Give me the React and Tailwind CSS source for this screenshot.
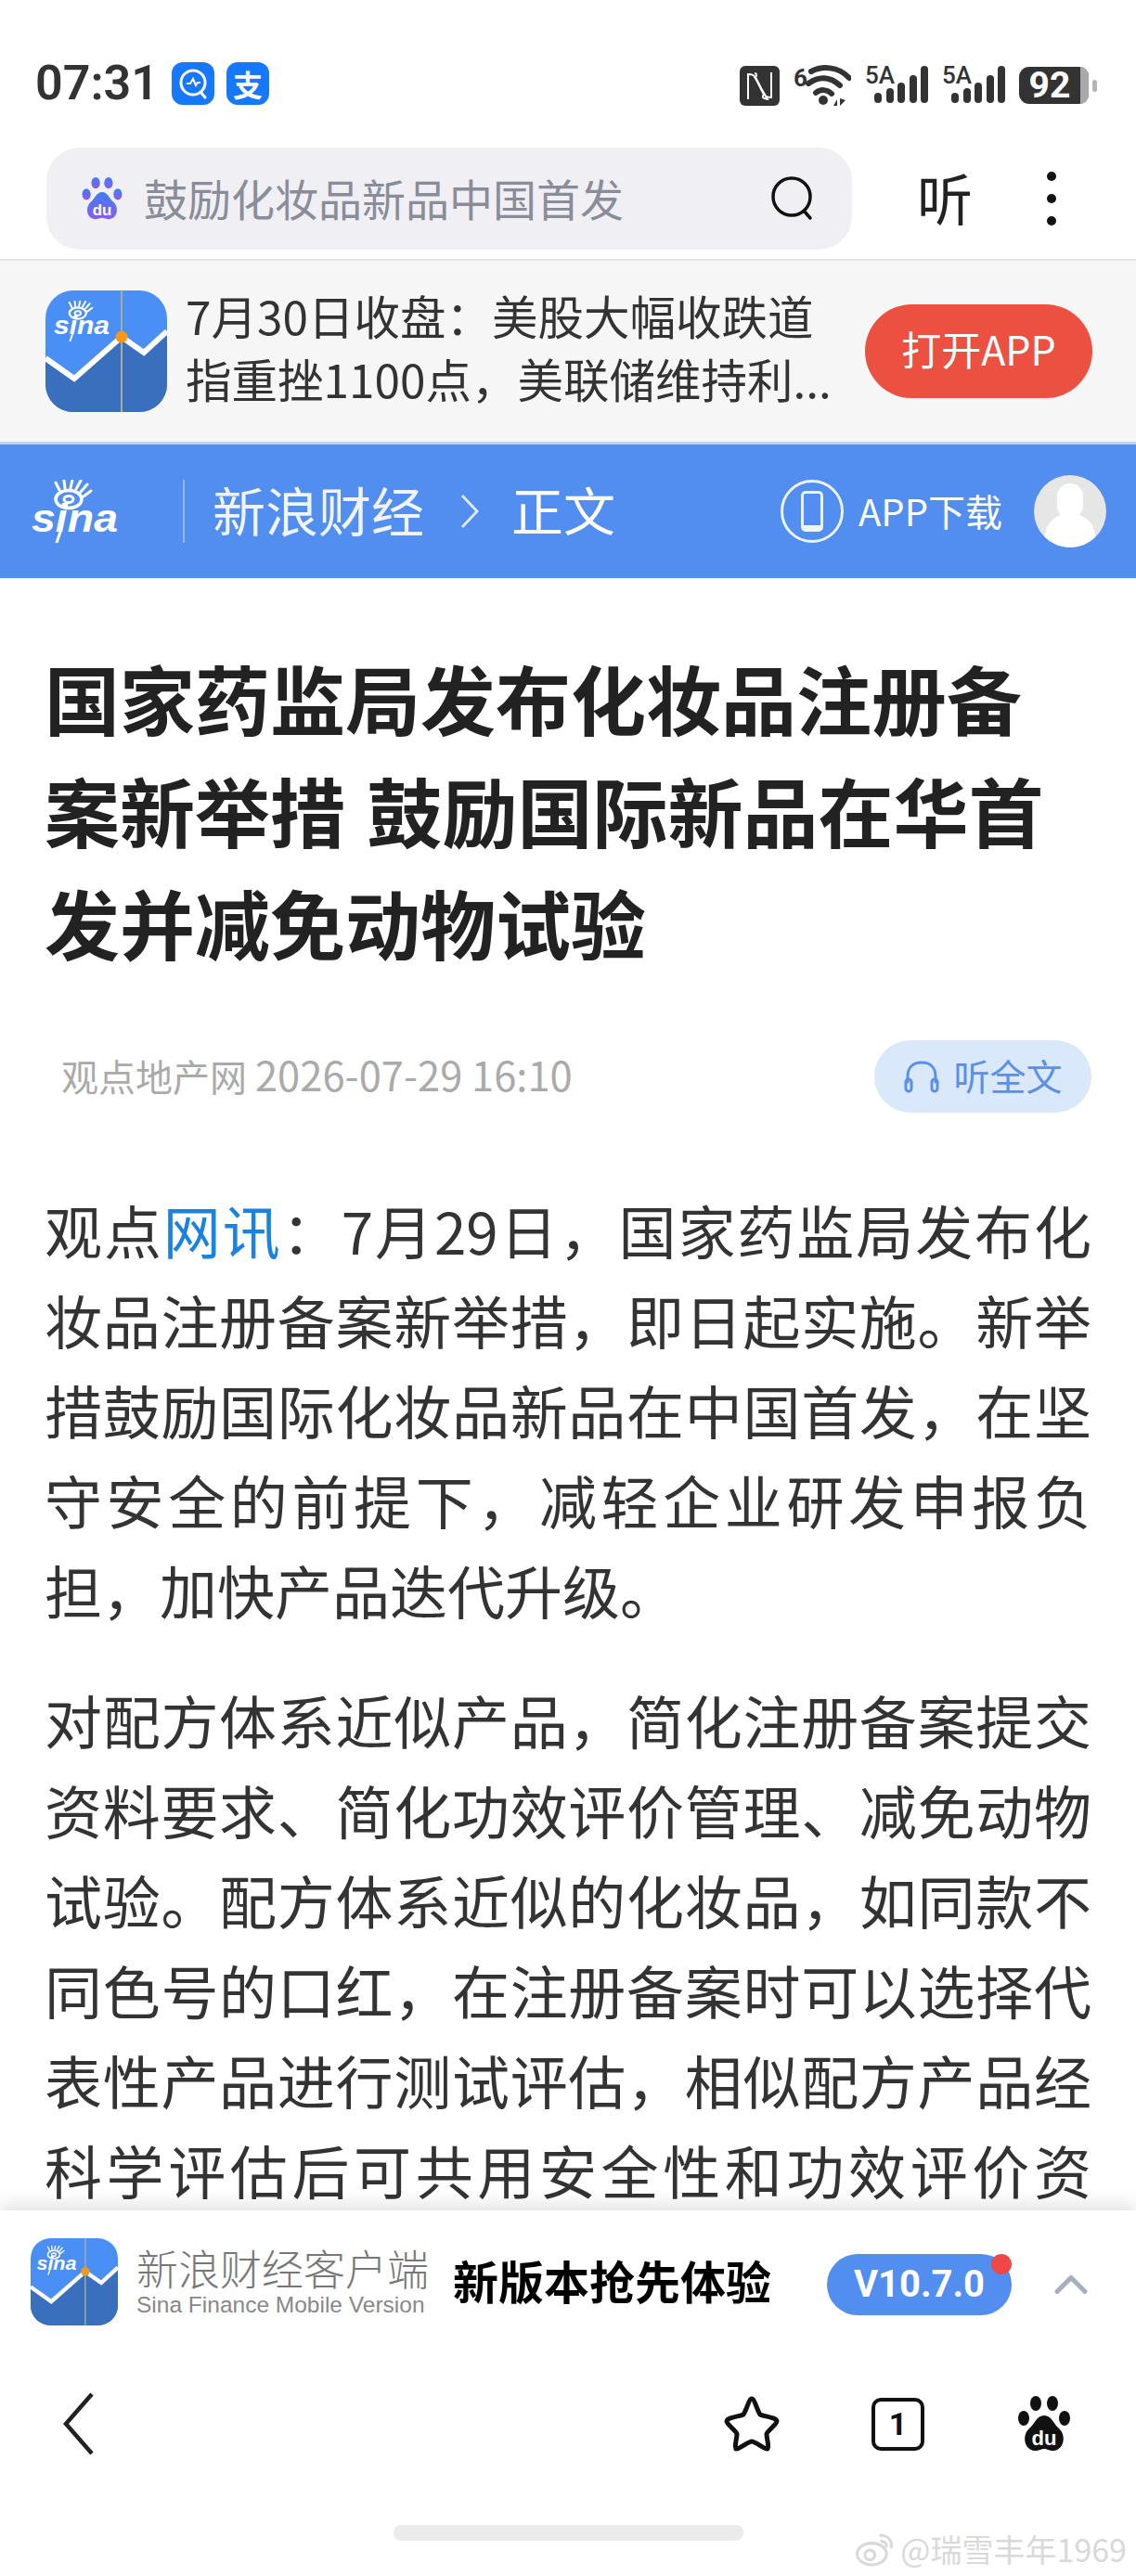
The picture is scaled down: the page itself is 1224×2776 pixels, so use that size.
import { ChevronUp } from 'lucide-react';

const CJK = '"Noto Sans CJK SC", "Noto Sans", sans-serif';

function SinaMark({ color = '#fff' }) {
  // eye + wordmark, drawn in a 95x68 box
  return (
    <svg viewBox="0 0 95 68" className="h-full w-full">
      <g fill="none" stroke={color}>
        <ellipse cx="41" cy="21" rx="14" ry="9.5" strokeWidth="3.5" />
        <ellipse cx="41" cy="21" rx="5" ry="3.5" strokeWidth="3" />
        <path d="M31 11 L27 3 M37 9 L36 1 M43 9 L45 0 M49 10 L54 1 M54 13 L61 5 M57 18 L65 12" strokeWidth="3" strokeLinecap="round" />
        <path d="M32 56 L28 68" strokeWidth="3" strokeLinecap="round" />
      </g>
      <text x="1" y="56" fill={color} fontFamily="Liberation Sans" fontStyle="italic" fontWeight="700" fontSize="42" textLength="93" lengthAdjust="spacingAndGlyphs">sina</text>
    </svg>
  );
}

function SinaAppIcon({ className }) {
  return (
    <svg viewBox="0 0 131 131" className={className}>
      <defs>
        <clipPath id="sq"><rect width="131" height="131" rx="30" /></clipPath>
      </defs>
      <g clipPath="url(#sq)">
        <rect width="131" height="131" fill="#4a8ff5" />
        <path d="M0 73 L31 95 L82 50 L106 67 L131 44 V131 H0 Z" fill="#3a6fbe" />
        <path d="M0 73 L31 95 L82 50 L106 67 L131 44" fill="none" stroke="#fff" strokeWidth="6" />
        <rect x="81" width="2" height="131" fill="#a9ab9f" />
        <circle cx="82" cy="50" r="6.5" fill="#f6981c" />
      </g>
      <svg x="8" y="11" width="62" height="44" viewBox="0 0 95 68"><SinaMark /></svg>
    </svg>
  );
}

function Paw({ className, gradient }) {
  const fill = gradient ? 'url(#pawg)' : '#111';
  return (
    <svg viewBox="0 0 56 60" className={className}>
      <defs>
        <linearGradient id="pawg" x1="0" y1="0" x2="0" y2="1">
          <stop offset="0" stopColor="#3f7df0" />
          <stop offset="1" stopColor="#8a5cf0" />
        </linearGradient>
      </defs>
      <ellipse cx="19" cy="8" rx="6" ry="8" fill={fill} />
      <ellipse cx="37" cy="8" rx="6" ry="8" fill={fill} />
      <ellipse cx="6" cy="24" rx="6" ry="8" fill={fill} />
      <ellipse cx="50" cy="24" rx="6" ry="8" fill={fill} />
      <path d="M28 21 C36 21 38 30 44 35 C52 42 50 58 38 59 C33 59 31 57 28 57 C25 57 23 59 18 59 C6 58 4 42 12 35 C18 30 20 21 28 21 Z" fill={fill} />
      <text x="28" y="53" textAnchor="middle" fill="#fff" fontFamily="Liberation Sans" fontWeight="700" fontSize="22">du</text>
    </svg>
  );
}

function Signal() {
  return (
    <div className="relative h-[42px] w-[68px]">
      <span className="absolute left-0 top-[-3px] font-['Roboto'] text-[26px] font-medium leading-[26px] text-[#333]">5A</span>
      <svg viewBox="0 0 68 42" className="h-full w-full">
        <g fill="#333">
          <rect x="10" y="29" width="8" height="11" rx="4" />
          <rect x="23" y="24" width="8" height="16" rx="4" />
          <rect x="35" y="18" width="8" height="22" rx="4" />
          <rect x="48" y="10" width="8" height="30" rx="4" />
          <rect x="60" y="0" width="8" height="40" rx="4" />
        </g>
      </svg>
    </div>
  );
}

function StatusIcons() {
  return (
    <div className="flex items-center gap-[15px]">
      <svg viewBox="0 0 43 43" className="h-[43px] w-[43px]">
        <rect width="43" height="43" rx="6" fill="#333" />
        <path d="M9 36 V9 C14 9 16 10 19 16 L26 30 C24 34 25 35 27 35 C28 35 29 36 30 36 L23 24 L15 10 M34 7 V34 C29 34 27 33 24 27 L17 13 C19 9 18 8 16 8" fill="none" stroke="#fff" strokeWidth="2" />
      </svg>
      <div className="relative h-[44px] w-[62px]">
        <span className="absolute left-0 top-[1px] font-['Roboto'] text-[26px] font-bold leading-[26px] text-[#333]">6</span>
        <svg viewBox="0 0 62 44" className="h-full w-full">
          <g fill="none" stroke="#333" strokeLinecap="round">
            <path d="M19 7 C30 1 48 1 60 14" strokeWidth="6" />
            <path d="M16 20 C27 12 39 12 50 22" strokeWidth="6" />
            <path d="M24 30 C29 26 36 26 41 31" strokeWidth="6" />
          </g>
          <circle cx="32" cy="38" r="5" fill="#333" />
          <path d="M43 44 L47 37 V44 Z M50 36 V44 L56 38 Z" fill="#333" />
        </svg>
      </div>
      <Signal />
      <Signal />
      <div className="flex items-center gap-[4px]">
        <div className="flex h-[40px] w-[75px] rounded-[11px] bg-[#333]">
          <span className="flex-1 text-center font-['Roboto'] text-[39px] font-bold leading-[40px] text-white">92</span>
          <span className="w-[9px] rounded-r-[11px] bg-[#a9a9a9]" />
        </div>
        <span className="h-[13px] w-[5px] rounded-full bg-[#b5b5b5]" />
      </div>
    </div>
  );
}

function StatusBar() {
  return (
    <div className="flex h-[159px] items-start justify-between pl-[38px] pr-[42px] pt-[67px]">
      <div className="flex items-center gap-[13px]">
        <span className="w-[134px] font-['Roboto'] text-[52px] font-semibold leading-[46px] text-[#333]">07:31</span>
        <div className="grid h-[46px] w-[46px] place-items-center rounded-[12px] bg-[#1677ff]">
          <svg viewBox="0 0 46 46" className="h-full w-full" fill="none" stroke="#fff" strokeWidth="3">
            <circle cx="23" cy="22" r="13" />
            <path d="M16 23 L20 23 L23 18 L26 25 L28 22 L31 22" strokeWidth="2" />
            <path d="M31 32 L36 38" strokeLinecap="round" />
          </svg>
        </div>
        <div className="grid h-[46px] w-[46px] place-items-center rounded-[12px] bg-[#1677ff] text-[32px] font-bold leading-none text-white">支</div>
      </div>
      <div className="pt-[3px]">
        <StatusIcons />
      </div>
    </div>
  );
}

function SearchRow() {
  return (
    <div className="flex h-[122px] items-start border-b-2 border-[#e4e4e4] pl-[50px]">
      <div className="flex h-[110px] w-[868px] items-center rounded-[36px] bg-[#f0f0f4] pl-[38px] pr-[40px]">
        <Paw gradient className="h-[46px] w-[44px]" />
        <span className="ml-[23px] flex-1 pb-[3px] text-[47px] leading-none text-[#8a8d99]">鼓励化妆品新品中国首发</span>
        <svg viewBox="0 0 48 48" className="h-[48px] w-[48px]" fill="none" stroke="#111" strokeWidth="3.5" strokeLinecap="round">
          <circle cx="23" cy="22" r="20" />
          <path d="M36 37 L43 45" />
        </svg>
      </div>
      <span className="ml-[70px] mt-[21px] text-[60px] leading-[64px] text-[#222]">听</span>
      <div className="ml-[80px] mt-[26px] flex flex-col gap-[14px]">
        <span className="h-[10px] w-[10px] rounded-full bg-[#111]" />
        <span className="h-[10px] w-[10px] rounded-full bg-[#111]" />
        <span className="h-[10px] w-[10px] rounded-full bg-[#111]" />
      </div>
    </div>
  );
}

function OpenAppBanner() {
  return (
    <div className="flex h-[198px] items-center border-b-[3px] border-[#bcd2f2] bg-[#f6f6f6] pl-[49px] pr-[47px]">
      <SinaAppIcon className="h-[131px] w-[131px] shrink-0" />
      <p className="ml-[20px] whitespace-nowrap pb-[10px] text-[49.5px] leading-[68px] text-[#333]">
        7月30日收盘：美股大幅收跌道
        <br />
        指重挫1100点，美联储维持利...
      </p>
      <button className="ml-auto h-[101px] w-[245px] rounded-full bg-[#ec5040] pb-[6px] text-[43px] text-white">打开APP</button>
    </div>
  );
}

function SinaHeader() {
  return (
    <div className="flex h-[144px] items-center bg-[#528df0] pl-[33px] pr-[32px] text-white">
      <div className="h-[68px] w-[95px]">
        <SinaMark />
      </div>
      <span className="ml-[69px] h-[68px] w-[2px] bg-white/40" />
      <span className="ml-[30px] pb-[6px] text-[57px] leading-none opacity-90">新浪财经</span>
      <svg viewBox="0 0 22 38" className="ml-[38px] h-[38px] w-[22px] opacity-80" fill="none" stroke="#fff" strokeWidth="3">
        <path d="M3 2 L19 19 L3 36" />
      </svg>
      <span className="ml-[34px] pb-[6px] text-[56px] leading-none">正文</span>
      <div className="ml-auto grid h-[68px] w-[68px] place-items-center rounded-full border-[3px] border-white/90">
        <span className="h-[44px] w-[24px] rounded-[5px] border-[3px] border-b-[7px] border-white/90" />
      </div>
      <span className="ml-[16px] pb-[2px] text-[40px] leading-none">APP下载</span>
      <div className="relative ml-[34px] h-[78px] w-[78px] overflow-hidden rounded-full bg-[#e6e6e6]">
        <span className="absolute left-[25px] top-[9px] h-[38px] w-[28px] rounded-full bg-white" />
        <span className="absolute left-[12px] top-[42px] h-[50px] w-[54px] rounded-[24px] bg-white" />
      </div>
    </div>
  );
}

function Article() {
  return (
    <div className="min-h-0 flex-1 overflow-hidden px-[48px]">
      <h1 className="mt-[67px] text-[81px] font-bold leading-[121px] text-[#222] [word-spacing:5px]">
        国家药监局发布化妆品注册备
        <br />
        案新举措 鼓励国际新品在华首
        <br />
        发并减免动物试验
      </h1>
      <div className="mt-[68px] flex h-[78px] items-center justify-between">
        <span className="pb-[4px] pl-[18px] text-[40px] leading-none text-[#aaa]">
          观点地产网 <span className="text-[43.5px]">2026-07-29 16:10</span>
        </span>
        <div className="flex h-[78px] w-[234px] items-center justify-center gap-[14px] rounded-full bg-[#dae8fb] pb-[3px] text-[39px] text-[#5b8fe8]">
          <svg viewBox="0 0 40 36" className="mt-[3px] h-[36px] w-[40px]" fill="none" stroke="#5b8fe8" strokeWidth="3" strokeLinecap="round">
            <path d="M5 24 V18 C5 8 11 3 20 3 C29 3 35 8 35 18 V24" />
            <rect x="3" y="21" width="6" height="13" rx="3" />
            <rect x="31" y="21" width="6" height="13" rx="3" />
          </svg>
          听全文
        </div>
      </div>
      <div className="mt-[78px] text-justify text-[62px] leading-[97px] text-[#333]">
        <p>
          观点<span className="text-[#1a82e2]">网讯</span>：7月29日，国家药监局发布化妆品注册备案新举措，即日起实施。新举措鼓励国际化妆品新品在中国首发，在坚守安全的前提下，减轻企业研发申报负担，加快产品迭代升级。
        </p>
        <p className="mt-[43px] [text-align-last:justify]">
          对配方体系近似产品，简化注册备案提交资料要求、简化功效评价管理、减免动物试验。配方体系近似的化妆品，如同款不同色号的口红，在注册备案时可以选择代表性产品进行测试评估，相似配方产品经科学评估后可共用安全性和功效评价资
        </p>
      </div>
    </div>
  );
}

function Footer() {
  return (
    <div className="relative z-10 h-[394px] shrink-0 bg-white shadow-[0_-6px_18px_rgba(0,0,0,0.12)]">
      <div className="flex h-[160px] items-center pb-[6px] pl-[33px]">
        <SinaAppIcon className="h-[94px] w-[94px] shrink-0" />
        <div className="ml-[20px] w-[316px] pb-[2px]">
          <div className="whitespace-nowrap text-[45px] font-light leading-[50px] text-[#777]">新浪财经客户端</div>
          <div className="mt-[2px] whitespace-nowrap font-['Liberation_Sans'] text-[24.5px] leading-[26px] text-[#888]">Sina Finance Mobile Version</div>
        </div>
        <span className="ml-[25px] whitespace-nowrap pb-[6px] text-[49px] font-bold leading-none text-black">新版本抢先体验</span>
        <div className="relative ml-[60px] mt-[6px] grid h-[66px] w-[199px] place-items-center rounded-full bg-[#528df0] font-['Roboto'] text-[40px] font-bold text-white">
          V10.7.0
          <span className="absolute right-0 top-0 h-[22px] w-[22px] rounded-full bg-[#f04848]" />
        </div>
        <ChevronUp size={60} strokeWidth={2} className="ml-[34px] mt-[6px] text-[#a9aebd]" />
      </div>
      <div className="flex h-[114px] items-center pt-[26px]">
        <svg viewBox="0 0 36 68" className="ml-[66px] h-[68px] w-[36px]" fill="none" stroke="#222" strokeWidth="4.5">
          <path d="M33 2 L5 34 L33 66" />
        </svg>
        <svg viewBox="0 0 60 60" className="ml-auto h-[60px] w-[60px]" fill="none" stroke="#111" strokeWidth="5" strokeLinejoin="round" strokeLinecap="round">
          <path d="M30 3 C33 3 36 16 39 20 C43 22 56 23 57 27 C57 31 47 37 46 41 C46 46 49 54 47 57 C44 58 34 49 30 49 C26 49 16 58 13 57 C11 54 14 46 14 41 C13 37 3 31 3 27 C4 23 17 22 21 20 C24 16 27 3 30 3 Z" />
        </svg>
        <div className="ml-[99px] grid h-[57px] w-[57px] place-items-center rounded-[10px] border-[4px] border-[#111] font-['Roboto'] text-[34px] font-bold leading-none text-[#111]">1</div>
        <Paw className="ml-[101px] mr-[71px] h-[60px] w-[56px]" />
      </div>
      <div className="mx-auto mt-[65px] h-[17px] w-[377px] rounded-[8px] bg-[#ebebeb]" />
      <div className="absolute bottom-[10px] right-[10px] flex items-center gap-[6px] text-[34px] leading-none text-[#d9d9d9]">
        <svg viewBox="0 0 40 36" className="h-[38px] w-[43px]" fill="none" stroke="#d9d9d9" strokeWidth="3">
          <ellipse cx="17" cy="23" rx="15" ry="11" />
          <circle cx="15" cy="24" r="5" />
          <path d="M26 4 C33 4 38 9 37 16 M27 10 C30 10 32 12 32 15" strokeLinecap="round" />
        </svg>
        @瑞雪丰年1969
      </div>
    </div>
  );
}

export default function App() {
  return (
    <div className="flex h-[2776px] w-[1224px] flex-col overflow-hidden bg-white" style={{ fontFamily: CJK }}>
      <StatusBar />
      <SearchRow />
      <OpenAppBanner />
      <SinaHeader />
      <Article />
      <Footer />
    </div>
  );
}
